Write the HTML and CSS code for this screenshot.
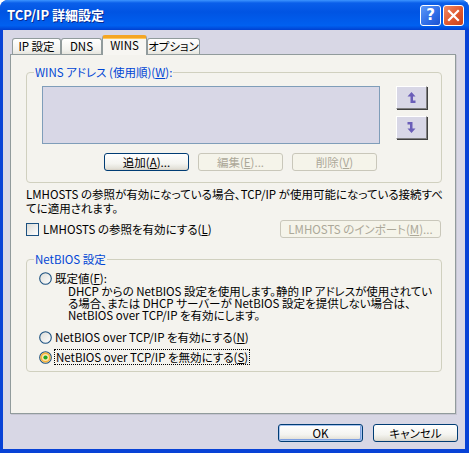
FILE: index.html
```html
<!DOCTYPE html>
<html lang="ja">
<head>
<meta charset="utf-8">
<title>TCP/IP 詳細設定</title>
<link rel="stylesheet" href="styles.css">
</head>
<body>
<div class="window">
  <div class="titlebar">
    <span class="title">TCP/IP 詳細設定</span>
    <div class="caption-btns">
      <span class="cbtn help">?</span>
      <span class="cbtn close"><svg width="19" height="19" viewBox="0 0 19 19"><path d="M5 5 L14 14 M14 5 L5 14" stroke="#fff" stroke-width="2.2" stroke-linecap="square"/></svg></span>
    </div>
  </div>
  <div class="client">
    <div class="tabs">
      <span class="tab t1">IP 設定</span>
      <span class="tab t2">DNS</span>
      <span class="tab t3 active">WINS</span>
      <span class="tab t4">オプション</span>
    </div>
    <div class="panel">
      <fieldset class="group wins">
        <legend>WINS アドレス (使用順)(<u>W</u>):</legend>
        <div class="wins-row">
          <div class="listbox"></div>
          <div class="updown">
            <span class="sbtn"><svg width="9" height="11" viewBox="0 0 9 11"><path d="M4.5 0 L8.5 4.5 L6 4.5 L6 8.5 L8.5 8.5 L8.5 11 L3.5 11 L3.5 4.5 L0.5 4.5 Z" fill="#6A5EB8"/></svg></span>
            <span class="sbtn"><svg width="9" height="11" viewBox="0 0 9 11"><path d="M0.5 0 L5.5 0 L5.5 6.5 L8.5 6.5 L4.5 11 L0.5 6.5 L3 6.5 L3 2.5 L0.5 2.5 Z" fill="#6A5EB8"/></svg></span>
          </div>
        </div>
        <div class="btnrow">
          <span class="btn">追加(<u>A</u>)...</span>
          <span class="btn disabled">編集(<u>E</u>)...</span>
          <span class="btn disabled">削除(<u>V</u>)</span>
        </div>
      </fieldset>
      <p class="note">LMHOSTS の参照が有効になっている場合、TCP/IP が使用可能になっている接続すべ<br>てに適用されます。</p>
      <div class="lmrow">
        <label class="check"><span class="checkbox"></span><span>LMHOSTS の参照を有効にする(<u>L</u>)</span></label>
        <span class="btn disabled wide">LMHOSTS のインポート(<u>M</u>)...</span>
      </div>
      <fieldset class="group netbios">
        <legend>NetBIOS 設定</legend>
        <div class="radio r1">
          <svg class="rad" width="13" height="13" viewBox="0 0 13 13"><defs><linearGradient id="rg" x1="0" y1="0" x2="1" y2="1"><stop offset="0" stop-color="#DCDCD7"/><stop offset="1" stop-color="#FFFFFF"/></linearGradient></defs><circle cx="6.5" cy="6.5" r="5.8" fill="url(#rg)" stroke="#1C5180" stroke-width="1.1"/></svg>
          <span>既定値(<u>F</u>):</span>
        </div>
        <p class="desc">DHCP からの NetBIOS 設定を使用します。静的 IP アドレスが使用されてい<br>る場合、または DHCP サーバーが NetBIOS 設定を提供しない場合は、<br>NetBIOS over TCP/IP を有効にします。</p>
        <div class="radio r2">
          <svg class="rad" width="13" height="13" viewBox="0 0 13 13"><circle cx="6.5" cy="6.5" r="5.8" fill="url(#rg)" stroke="#1C5180" stroke-width="1.1"/></svg>
          <span>NetBIOS over TCP/IP を有効にする(<u>N</u>)</span>
        </div>
        <div class="radio r3">
          <svg class="rad" width="13" height="13" viewBox="0 0 13 13"><circle cx="6.5" cy="6.5" r="5.8" fill="#FDE7B0" stroke="#1C5180" stroke-width="1.1"/><circle cx="6.5" cy="6.5" r="4.3" fill="none" stroke="#F6B23A" stroke-width="1.6"/><circle cx="6.5" cy="6.5" r="2.1" fill="#22A623"/></svg>
          <span class="focus">NetBIOS over TCP/IP を無効にする(<u>S</u>)</span>
        </div>
      </fieldset>
    </div>
    <div class="footer">
      <span class="btn default">OK</span>
      <span class="btn">キャンセル</span>
    </div>
  </div>
</div>
</body>
</html>
```

FILE: styles.css
```css
* { box-sizing: border-box; }
html, body { margin: 0; padding: 0; background: #ffffff; }
body {
  width: 469px;
  height: 453px;
  overflow: hidden;
  font-family: "Noto Sans CJK JP", sans-serif;
  font-size: 11.5px;
  font-feature-settings: "palt";
  color: #000;
}
u { text-decoration: underline; text-underline-offset: 1px; }

.window {
  width: 469px;
  height: 453px;
  background: #0842D6;
  border-radius: 8px 8px 0 0;
  display: flex;
  flex-direction: column;
}
.titlebar {
  height: 30px;
  flex: none;
  display: flex;
  align-items: center;
  justify-content: space-between;
  padding: 0 5px 0 7px;
  border-radius: 8px 8px 0 0;
  background: linear-gradient(to bottom, #3D95FF 0%, #0A5FEA 10%, #0054E3 40%, #0060F0 85%, #0050E0 93%, #0040D0 100%);
}
.title {
  color: #fff;
  font-weight: bold;
  font-size: 13px;
  line-height: 16px;
  text-shadow: 1px 1px 0 #0A2A90;
}
.caption-btns { display: flex; gap: 2px; }
.cbtn {
  width: 21px;
  height: 21px;
  border: 1px solid #fff;
  border-radius: 3px;
  display: flex;
  align-items: center;
  justify-content: center;
}
.help {
  background: linear-gradient(135deg, #5C9AF8 0%, #2E6BE6 60%, #1C52D0 100%);
  color: #fff;
  font-family: "DejaVu Sans", sans-serif;
  font-weight: bold;
  font-size: 15px;
  line-height: 19px;
}
.close {
  background: linear-gradient(135deg, #EE8A66 0%, #E0582E 55%, #C8411C 100%);
}

.client {
  flex: 1;
  margin: 0 4px 4px 3px;
  background: #D8D7E5;
  padding: 5px 9px 0 7px;
  display: flex;
  flex-direction: column;
}
.tabs {
  height: 19px;
  margin-left: 2px;
  display: flex;
  align-items: flex-end;
}
.tab {
  height: 16px;
  border: 1px solid #919B9C;
  border-bottom: none;
  border-radius: 3px 3px 0 0;
  background: linear-gradient(to bottom, #FFFFFF, #F3F3EF 70%, #E6E5DE);
  text-align: center;
  line-height: 15px;
  white-space: nowrap;
}
.t1 { width: 49px; }
.t2 { width: 41px; }
.t3 { width: 45px; }
.t4 { width: 53px; }
.tab.active {
  height: 20px;
  margin-bottom: -1px;
  position: relative;
  z-index: 1;
  background: #F7F6F2;
  border-top: 3px solid #F4A523;
  box-shadow: inset 0 1px 0 #FFC75A;
  line-height: 15px;
}

.panel {
  height: 360px;
  border: 1px solid #919B9C;
  background: #F4F3EE;
  box-shadow: 1px 1px 0 #C6C5D2;
  padding: 10px 13px 0 15px;
  display: flex;
  flex-direction: column;
}
.group {
  margin: 0;
  border: 1px solid #D0D0BF;
  border-radius: 4px;
  min-width: 0;
}
.group legend {
  color: #0046D5;
  font-size: 11.5px;
  line-height: 14px;
  padding: 0 1px;
}
.wins { padding: 7px 0 11px 15px; }
.wins legend { margin-left: -8px; }
.wins-row { display: flex; }
.listbox {
  width: 338px;
  height: 58px;
  border: 1px solid #7F9DB9;
  background: #D8D7E6;
}
.updown {
  margin-left: 16px;
  display: flex;
  flex-direction: column;
  gap: 7px;
}
.sbtn {
  width: 31px;
  height: 23px;
  background: #D8D7E6;
  border: 1px solid;
  border-color: #FFFFFF #808080 #808080 #FFFFFF;
  box-shadow: 1px 1px 0 #404040;
  display: flex;
  align-items: center;
  justify-content: center;
}
.btnrow {
  margin-top: 9px;
  padding-left: 62px;
  display: flex;
  gap: 9px;
}
.btn {
  width: 85px;
  height: 18px;
  border: 1px solid #003C74;
  border-radius: 3px;
  background: linear-gradient(to bottom, #FFFFFF 0%, #F4F4F0 60%, #E3E1D8 90%, #D6D0C5 100%);
  display: flex;
  align-items: center;
  justify-content: center;
  line-height: 14px;
  white-space: nowrap;
}
.btn.disabled {
  border-color: #C9C7BA;
  color: #ACA899;
  background: #F5F4EA;
}
.btn.wide { width: 161px; }
.btn.default {
  box-shadow: inset 0 0 0 1px #A8C4EE, inset -1px -1px 0 1px #7FA0E0;
}

.note {
  margin: 4px 0 0 0;
  line-height: 14px;
  white-space: nowrap;
}
.lmrow {
  margin-top: 5px;
  height: 18px;
  padding-right: 1px;
  display: flex;
  align-items: center;
  justify-content: space-between;
}
.check {
  display: flex;
  align-items: center;
  gap: 4px;
  line-height: 14px;
}
.checkbox {
  width: 13px;
  height: 13px;
  border: 1px solid #1C5180;
  background: linear-gradient(135deg, #DCDCD7, #FFFFFF);
}

.netbios {
  margin-top: 14px;
  padding: 5px 0 7px 12px;
}
.netbios legend { margin-left: -5px; }
.radio {
  height: 14px;
  display: flex;
  align-items: center;
  gap: 3px;
  line-height: 14px;
  white-space: nowrap;
}
.rad { flex: none; }
.desc {
  margin: 0 0 0 29px;
  line-height: 12px;
  white-space: nowrap;
}
.r2 { margin-top: 9px; }
.r3 { margin-top: 6px; }
.focus {
  outline: 1px dotted #000;
  outline-offset: 0;
  padding: 0 1px;
  line-height: 14px;
}

.footer {
  margin-top: 10px;
  margin-right: -2px;
  display: flex;
  justify-content: flex-end;
  gap: 10px;
}
```
